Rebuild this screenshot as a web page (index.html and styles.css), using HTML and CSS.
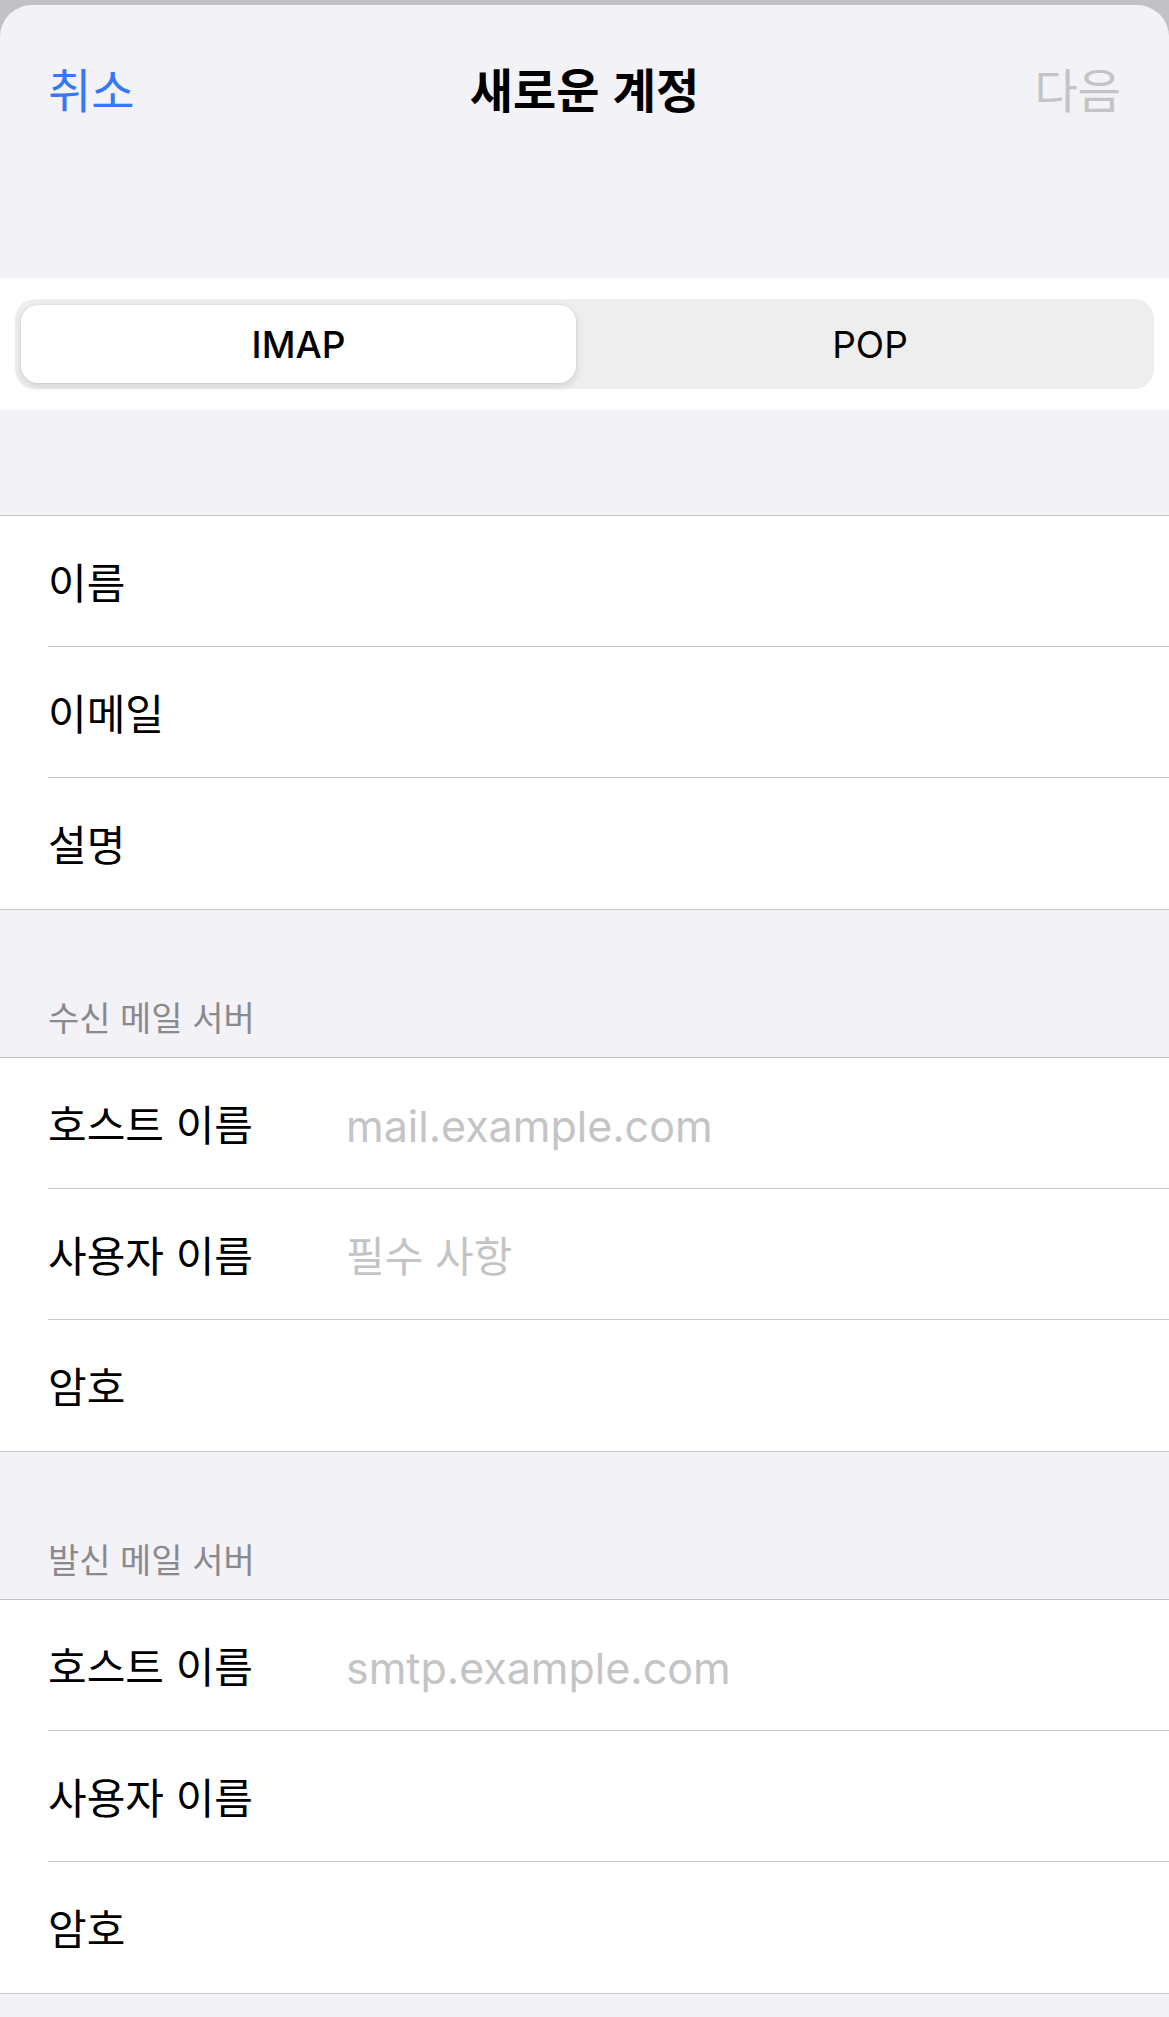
FILE: index.html
```html
<!DOCTYPE html>
<html lang="ko">
<head>
<meta charset="utf-8">
<title>새로운 계정</title>
<link rel="stylesheet" href="styles.css">
</head>
<body>
<div class="sheet">
  <header class="header">
    <nav class="nav">
      <span class="nav-btn cancel">취소</span>
      <span class="nav-title">새로운 계정</span>
      <span class="nav-btn next">다음</span>
    </nav>
  </header>

  <div class="seg-band">
    <div class="segmented">
      <div class="seg seg-selected">IMAP</div>
      <div class="seg seg-other">POP</div>
    </div>
  </div>

  <div class="gap"></div>

  <section class="group">
    <div class="row"><div class="row-inner"><span class="label">이름</span></div></div>
    <div class="row"><div class="row-inner"><span class="label">이메일</span></div></div>
    <div class="row"><div class="row-inner last"><span class="label">설명</span></div></div>
  </section>

  <div class="section-header"><span>수신 메일 서버</span></div>

  <section class="group">
    <div class="row"><div class="row-inner"><span class="label">호스트 이름</span><span class="value latin">mail.example.com</span></div></div>
    <div class="row"><div class="row-inner"><span class="label">사용자 이름</span><span class="value">필수 사항</span></div></div>
    <div class="row"><div class="row-inner last"><span class="label">암호</span></div></div>
  </section>

  <div class="section-header"><span>발신 메일 서버</span></div>

  <section class="group">
    <div class="row"><div class="row-inner"><span class="label">호스트 이름</span><span class="value latin">smtp.example.com</span></div></div>
    <div class="row"><div class="row-inner"><span class="label">사용자 이름</span></div></div>
    <div class="row"><div class="row-inner last"><span class="label">암호</span></div></div>
  </section>
</div>
</body>
</html>
```

FILE: styles.css
```css
html, body {
  margin: 0;
  padding: 0;
}

body {
  background: #c2c1c6;
  font-family: "Noto Sans CJK KR", "Noto Sans", sans-serif;
  color: #000;
}

.sheet {
  margin-top: 5px;
  background: #f2f2f7;
  border-radius: 32px 32px 0 0;
  overflow: hidden;
  min-height: 2012px;
}

.header {
  height: 273px;
}

.nav {
  height: 166px;
  padding: 0 48px;
  display: grid;
  grid-template-columns: 1fr auto 1fr;
  align-items: center;
  font-size: 47px;
  line-height: 1.2;
}

.nav-btn.cancel {
  color: #3478f6;
  justify-self: start;
}

.nav-btn.next {
  color: #c4c4c6;
  justify-self: end;
}

.nav-title {
  font-weight: 700;
}

.seg-band {
  background: #fff;
  padding: 21px 15px;
}

.segmented {
  height: 90px;
  box-sizing: border-box;
  padding: 6px;
  background: #eeeeef;
  border-radius: 20px;
  display: grid;
  grid-template-columns: 555px 1fr;
}

.seg {
  display: flex;
  align-items: center;
  justify-content: center;
  font-family: Inter, "Noto Sans", sans-serif;
  font-size: 37px;
  color: #000;
}

.seg-selected {
  background: #fff;
  border-radius: 17px;
  font-weight: 500;
  box-shadow: 0 3px 8px rgba(0, 0, 0, 0.12), 0 0 0 1px rgba(0, 0, 0, 0.03);
}

.seg-other {
  padding-left: 16px;
  font-weight: 400;
}

.gap {
  height: 105px;
}

.group {
  background: #fff;
  border-top: 1px solid #c6c6c8;
  border-bottom: 1px solid #c6c6c8;
}

.row {
  height: 131px;
  padding-left: 48px;
}

.row-inner {
  height: 100%;
  box-sizing: border-box;
  border-bottom: 1px solid #c6c6c8;
  display: flex;
  align-items: center;
}

.row-inner.last {
  border-bottom: none;
}

.label {
  width: 298px;
  flex: none;
  font-size: 42px;
  line-height: 1.2;
}

.value {
  font-size: 42px;
  line-height: 1.2;
  color: #c4c4c6;
}

.value.latin {
  font-family: Inter, "Noto Sans", sans-serif;
  font-size: 43px;
  padding-top: 8px;
}

.section-header {
  height: 147px;
  box-sizing: border-box;
  padding: 0 48px 20px;
  display: flex;
  align-items: flex-end;
  font-size: 34px;
  line-height: 40px;
  color: #8a8a8e;
}
```
